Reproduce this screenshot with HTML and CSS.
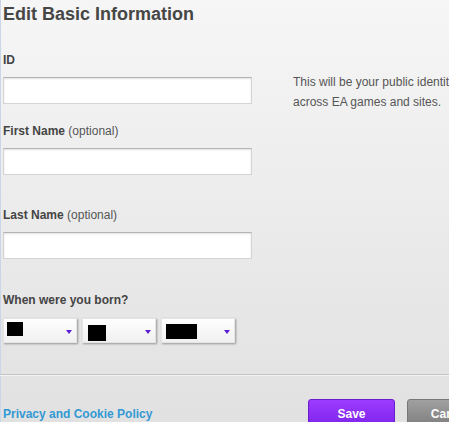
FILE: index.html
```html
<!DOCTYPE html>
<html>
<head>
<meta charset="utf-8">
<link rel="stylesheet" href="styles.css">
</head>
<body>
<div class="page">
  <h1 class="title">Edit Basic Information</h1>

  <div class="row-id">
    <label class="label">ID</label>
    <div class="input"></div>
    <p class="hint">This will be your public identity across EA games and sites.</p>
  </div>

  <div class="field field-first">
    <label class="label">First Name <span class="opt">(optional)</span></label>
    <div class="input"></div>
  </div>

  <div class="field field-last">
    <label class="label">Last Name <span class="opt">(optional)</span></label>
    <div class="input"></div>
  </div>

  <div class="field field-born">
    <label class="label">When were you born?</label>
    <div class="selects">
      <div class="select"><span class="redact r1"></span><span class="arrow"></span></div>
      <div class="select"><span class="redact r2"></span><span class="arrow"></span></div>
      <div class="select"><span class="redact r3"></span><span class="arrow"></span></div>
    </div>
  </div>

  <hr class="divider">

  <div class="footer">
    <a class="link" href="#">Privacy and Cookie Policy</a>
    <button class="btn btn-save">Save</button>
    <button class="btn btn-cancel">Cancel</button>
  </div>
</div>
</body>
</html>
```

FILE: styles.css
```css
html, body {
  margin: 0;
  padding: 0;
  overflow: hidden;
  width: 449px;
  height: 422px;
}
body {
  font-family: "Liberation Sans", Arial, sans-serif;
  background: linear-gradient(#f6f6f6, #e1e1e1);
}
.page {
  border-left: 1px solid #c9d6ea;
  padding-left: 2px;
  height: 422px;
  box-sizing: border-box;
}
.title {
  margin: 0;
  padding-top: 4px;
  font-size: 18px;
  line-height: 20px;
  font-weight: bold;
  color: #464646;
}
.row-id {
  display: grid;
  grid-template-columns: 249px 41px 200px;
  grid-template-rows: auto 27px;
  margin-top: 29px;
}
.row-id .label { grid-column: 1; grid-row: 1; }
.row-id .input { grid-column: 1; grid-row: 2; }
.row-id .hint { grid-column: 3; grid-row: 2; }
.field {
  display: flex;
  flex-direction: column;
  width: 249px;
}
.label {
  font-size: 12px;
  line-height: 14px;
  font-weight: bold;
  color: #444;
  margin-bottom: 10px;
}
.opt {
  font-weight: normal;
  color: #555;
}
.input {
  height: 27px;
  box-sizing: border-box;
  background: #fff;
  border: 1px solid #d4d4d4;
  border-top-color: #b4b4b4;
  box-shadow: inset 0 1px 2px rgba(0,0,0,0.12);
}
.hint {
  margin: -5px 0 0;
  font-size: 12px;
  line-height: 20px;
  color: #555;
  width: 200px;
  align-self: start;
}
.field-first { margin-top: 20px; }
.field-last { margin-top: 33px; }
.field-born { margin-top: 34px; }
.field-born .label { margin-bottom: 11px; }
.selects {
  display: flex;
  gap: 5px;
}
.select {
  position: relative;
  width: 74px;
  height: 25px;
  box-sizing: border-box;
  background: linear-gradient(#ffffff, #f0f0f0);
  border: 1px solid #e4e4e4;
  box-shadow: 1px 1px 2px rgba(0,0,0,0.35);
}
.arrow {
  position: absolute;
  right: 4px;
  top: 11px;
  width: 0;
  height: 0;
  border-left: 3.5px solid transparent;
  border-right: 3.5px solid transparent;
  border-top: 4px solid #5b1fd6;
}
.redact {
  position: absolute;
  background: #000;
}
.r1 { left: 3px; top: 3px; width: 16px; height: 14px; }
.r2 { left: 5px; top: 6px; width: 18px; height: 16px; }
.r3 { left: 4px; top: 5px; width: 31px; height: 15px; }
.divider {
  margin: 31px 0 0 -3px;
  width: 460px;
  border: 0;
  border-top: 1px solid #c4c4c4;
  border-bottom: 1px solid #f2f2f2;
  height: 0;
}
.footer {
  display: grid;
  grid-template-columns: 293px 87px 87px;
  column-gap: 12px;
  margin-top: 23px;
  width: 520px;
}
.link {
  align-self: start;
  margin-top: 8px;
  font-size: 12px;
  line-height: 14px;
  font-weight: bold;
  color: #3399d4;
  text-decoration: none;
}
.btn {
  height: 30px;
  padding: 0;
  border-radius: 3px;
  font-family: "Liberation Sans", Arial, sans-serif;
  font-size: 12px;
  font-weight: bold;
  color: #fff;
  text-align: center;
  line-height: 28px;
  box-sizing: border-box;
}
.btn-save {
  background: linear-gradient(#9b3cff, #7c22ea);
  border: 1px solid #6b1ccc;
}
.btn-cancel {
  background: linear-gradient(#a0a0a0, #7c7c7c);
  border: 1px solid #777;
}
```
